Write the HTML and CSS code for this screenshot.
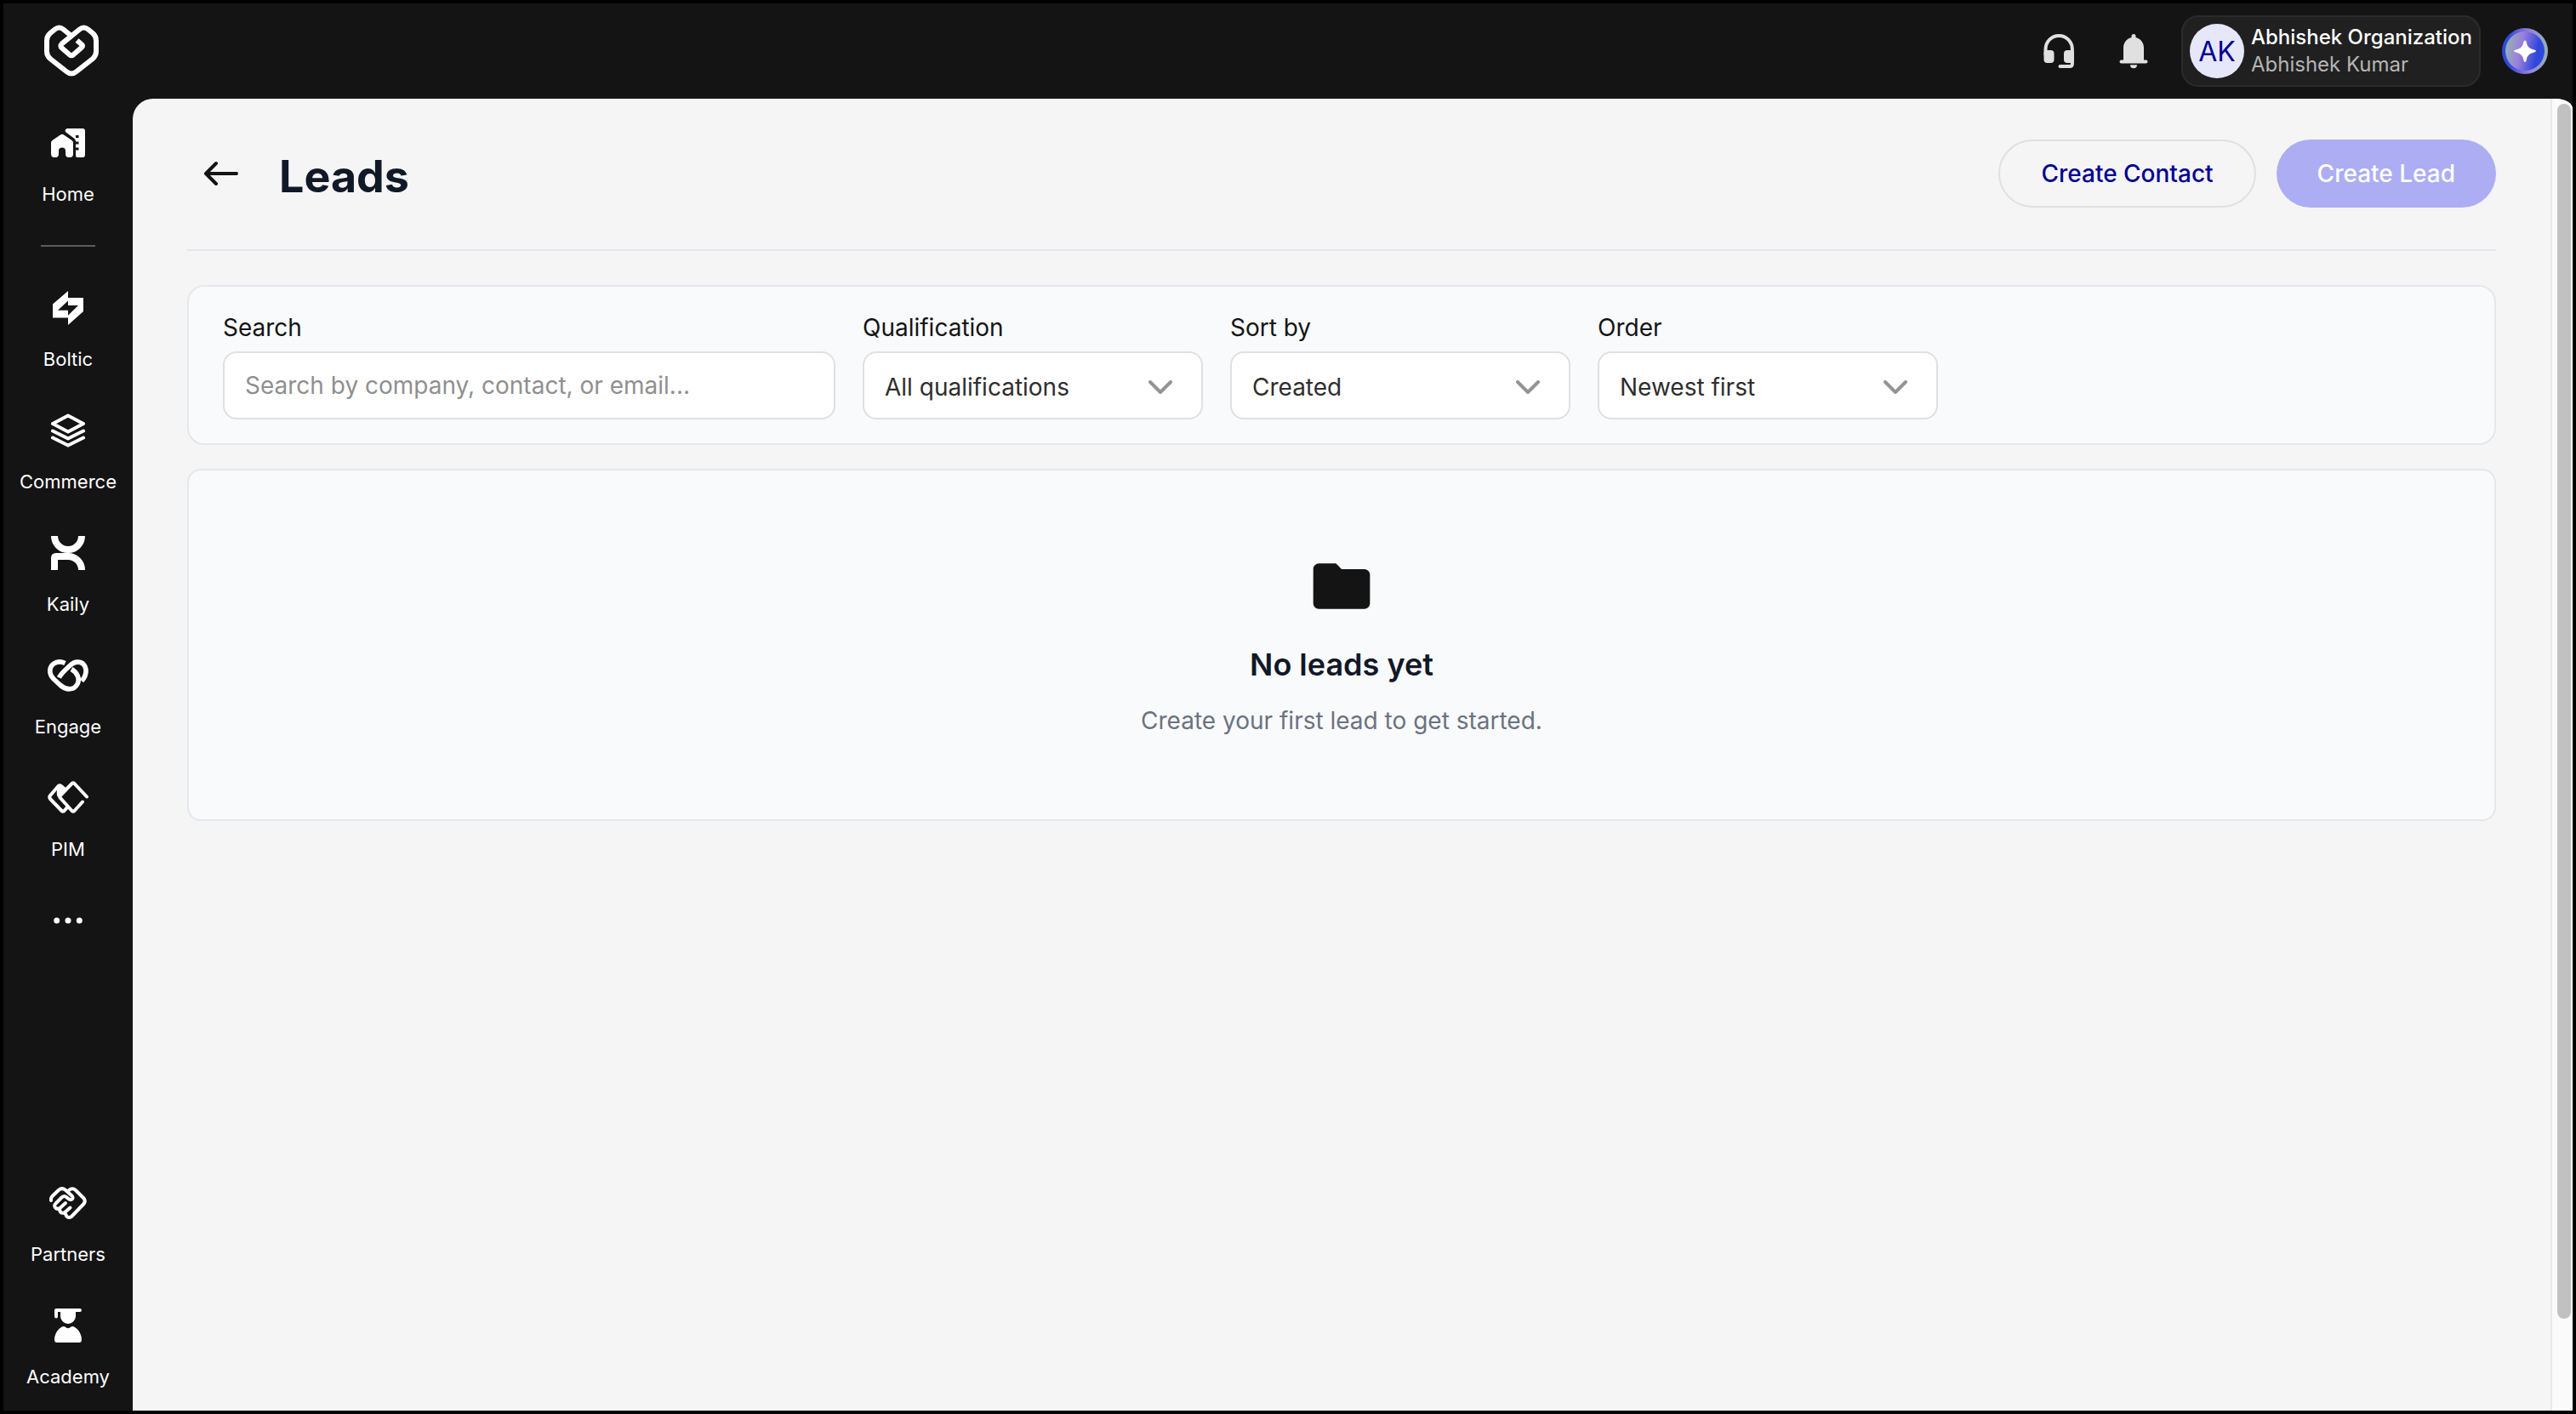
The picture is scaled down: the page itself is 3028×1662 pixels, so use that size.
FILE: index.html
```html
<!DOCTYPE html>
<html lang="en">
<head>
<meta charset="utf-8">
<title>Leads</title>
<link rel="stylesheet" href="styles.css">
</head>
<body>
<div class="app">
  <header class="topbar">
    <a class="brand" href="#" aria-label="Dashboard">
      <svg width="64" height="64" viewBox="52 28 64 64" fill="none" stroke="#fff" stroke-width="6"><path d="M90.500 47.500L96 52.300Q98 54 96 55.800L86 64.500Q84 66 82 64.500L72.800 56.500Q70 54 72.800 51.300L93.500 34.500Q98.500 30.500 103.500 34.500L109 39Q113 42.500 113 47.500V60.500Q113 65.500 109 69L90 84Q84 89 78 84L59 69Q55 65.500 55 60.500V47.500Q55 42.500 59 39L64.500 34.500Q69.500 30.500 74.500 34.500L83 41.500"/></svg>
    </a>
    <div class="tools">
      <div class="tool-icons">
        <button class="icon-button" aria-label="Support"><svg width="48" height="48" viewBox="2396 36 48 48" fill="#e0e0e0"><path d="M2404.500 64V58a15.700 16 0 0 1 31.400 0V75q0 3-3 3H2421.500" fill="none" stroke="#e0e0e0" stroke-width="4" stroke-linecap="round"/><rect x="2402.500" y="59" width="12" height="15" rx="4"/><rect x="2426" y="59" width="12" height="15" rx="4"/></svg></button>
        <button class="icon-button" aria-label="Notifications"><svg width="48" height="48" viewBox="2484 36 48 48" fill="#e0e0e0"><path d="M2505.500 42.500a2.500 2.500 0 0 1 5 0V44C2516.500 45.500 2520 50.500 2520 56V70.500H2522.500a2 2 0 0 1 0 4H2493.500a2 2 0 0 1 0-4H2496V56C2496 50.500 2499.500 45.500 2505.500 44zM2504 76.200h8a4 4 0 0 1-8 0z"/></svg></button>
      </div>
      <button class="account">
        <span class="avatar">AK</span>
        <span class="account-text"><span class="org">Abhishek Organization</span><span class="user">Abhishek Kumar</span></span>
      </button>
      <button class="icon-button" aria-label="Assistant">
        <svg width="56" height="56" viewBox="0 0 56 56"><defs><linearGradient id="ring" x1="0" y1="0" x2="1" y2="0"><stop offset="0" stop-color="#2f48dc"/><stop offset=".15" stop-color="#3049dc"/><stop offset=".6" stop-color="#9b7fdc"/><stop offset="1" stop-color="#93b3b4"/></linearGradient><linearGradient id="orb" x1="0" y1=".4" x2="1" y2=".6"><stop offset="0" stop-color="#93b3b4"/><stop offset=".38" stop-color="#9b7fdc"/><stop offset=".8" stop-color="#2f48dc"/><stop offset="1" stop-color="#2f48dc"/></linearGradient></defs><circle cx="28" cy="28" r="27" fill="url(#ring)"/><circle cx="28" cy="28" r="23" fill="url(#orb)"/><path d="M28 15.500Q29.500 15.500 30 19Q31.500 24.500 37 26Q41 26.800 41 28Q41 29.200 37 30Q31.500 31.500 30 37Q29.500 41 28 41Q26.500 41 26 37Q24.500 31.500 19 30Q15 29.200 15 28Q15 26.800 19 26Q24.500 24.500 26 19Q26.500 15.500 28 15.500Z" fill="#fff"/></svg>
      </button>
    </div>
  </header>

  <div class="body">
    <nav class="sidebar" aria-label="Products">
      <div class="nav-group">
        <a class="nav-item" href="#"><svg width="48" height="48" viewBox="56 144 48 48" fill="#fff"><path d="M60 168q0-2 1.500-3L71 158.500q2-1.300 4 0L84.500 165q1.500 1.200 1.500 3V181q0 4-4 4h-1q-4 0-4-4v-4q0-3.500-4-3.500t-4 3.500v4q0 4-4 4h-1q-4 0-4-4z"/><path d="M79 151H97q3 0 3 3V182q0 3-3 3H91q-2 0-2-2V166q0-2-2-3.500L77.500 155.500q-1.500-1.500-.5-3q.8-1.500 2-1.500z"/><path fill="#141414" d="M89 159h3.500v3H89zM89 166.500h3.500v3H89zM89 173.500h3.500v3H89z"/></svg><span>Home</span></a>
      </div>
      <hr class="nav-rule">
      <div class="nav-group">
        <a class="nav-item" href="#"><svg width="48" height="48" viewBox="56 338 48 48" fill="#fff" fill-rule="evenodd"><path d="M80 342L62 357.500V373.500H80V382L98 366V350H80zM80 353.500L68 364.700H80V370.700L92 359H80z"/></svg><span>Boltic</span></a>
        <a class="nav-item" href="#"><svg width="48" height="48" viewBox="56 482 48 48" fill="none" stroke="#fff" stroke-width="4" stroke-linecap="round" stroke-linejoin="round"><path d="M80 488.500L98 498L80 507.500L62 498zM62 506.500L80 515.500L98 506.500M62 514.500L80 523.500L98 514.500"/></svg><span>Commerce</span></a>
        <a class="nav-item" href="#"><svg width="48" height="48" viewBox="56 626 48 48" fill="none" stroke="#fff" stroke-width="8"><path d="M64 630a16 16 0 0 0 32 0M64 670V656q0-2 2-2H80a16 16 0 0 1 16 16"/></svg><span>Kaily</span></a>
        <a class="nav-item" href="#"><svg width="48" height="48" viewBox="56 770 48 48" fill="none" stroke="#fff" stroke-width="5.600"><path d="M76.500 779.500C66 774.500 57.500 782 59 791C59.500 794 61 796 63 798L71 805.500C78 811.500 87 811.500 91 804C94.500 797 90 790 84 786.500"/><path d="M69.500 796.500C72 791 78 786.500 82 782.500C88 776.500 96.500 776.500 100 783.500C102.500 790 99.500 796.500 96 800.500"/></svg><span>Engage</span></a>
        <a class="nav-item" href="#"><svg width="48" height="48" viewBox="56 914 48 48" fill="none" stroke="#fff" stroke-width="4" stroke-linecap="round" stroke-linejoin="round"><path d="M102 936.500L87.500 921Q86 919.500 84.500 921L71 935Q69.500 936.500 71 938L84.500 953Q86 954.500 87.500 953L97 942.500"/><path d="M77 928.500L72 924Q70 922.500 68.500 924L59 935Q57.500 937 59 939L72.500 953Q74 954.500 75.500 953L79 949"/><path fill="#fff" stroke-width="3" d="M70 925L76 930L71 935.500L68.500 935Q67.500 929 70 925z"/></svg><span>PIM</span></a>
        <button class="icon-button" aria-label="More"><svg width="48" height="48" viewBox="56 1058 48 48" fill="#fff"><circle cx="66.700" cy="1082" r="3.500"/><circle cx="80" cy="1082" r="3.500"/><circle cx="93.300" cy="1082" r="3.500"/></svg></button>
      </div>
      <div class="nav-group nav-bottom">
        <a class="nav-item" href="#"><svg width="48" height="48" viewBox="56 1390 48 48" fill="none" stroke="#fff" stroke-width="4" stroke-linecap="round" stroke-linejoin="round"><path d="M60 1411V1409.500Q60 1407.500 61.500 1406L69 1398.800Q73 1395.500 77 1398.800L84.500 1405.500Q87 1408.500 84 1409.800Q82 1410.500 80 1408.800L78 1407Q75.500 1405 73 1407L66 1414Q62.500 1417.500 65.500 1420Q68.500 1422 71 1419.500L77 1414"/><path d="M70 1421Q70.500 1427 75.500 1425.500L82.500 1419.500"/><path d="M77 1427Q79 1433 84 1430L98.500 1415Q101 1411.500 98.500 1408.500L89 1399Q85 1395.500 81 1399"/></svg><span>Partners</span></a>
        <a class="nav-item" href="#"><svg width="48" height="48" viewBox="56 1534 48 48" fill="#fff"><path d="M66 1538H94a2 2 0 0 1 0 4H89V1547a9 9 0 0 1-18 0V1542H68V1547.500a2 2 0 0 1-4 0V1540a2 2 0 0 1 2-2z"/><path d="M64 1575C64 1567 69 1561 74 1559Q75.500 1558.600 76.500 1559.600Q80 1563 83.500 1559.600Q84.500 1558.600 86 1559C91 1561 96 1567 96 1575Q96 1578 93 1578H67Q64 1578 64 1575z"/></svg><span>Academy</span></a>
      </div>
    </nav>

    <div class="panel">
      <main class="content">
        <div class="page-head">
          <button class="back" aria-label="Back"><svg width="48" height="48" viewBox="236 180 48 48" fill="none" stroke="#141414" stroke-width="4" stroke-linecap="round" stroke-linejoin="round"><path d="M278 204H242M254 192L242 204L254 216"/></svg></button>
          <h1>Leads</h1>
          <div class="actions">
            <button class="btn btn-outline">Create Contact</button>
            <button class="btn btn-primary" disabled>Create Lead</button>
          </div>
        </div>

        <form class="filters">
          <div class="field field-search">
            <label for="search">Search</label>
            <input id="search" type="text" placeholder="Search by company, contact, or email...">
          </div>
          <div class="field">
            <label for="qualification">Qualification</label>
            <div class="select"><select id="qualification"><option>All qualifications</option></select><svg class="chevron" width="28" height="16" viewBox="0 0 28 16"><path d="M2 2L14 14L26 2"/></svg></div>
          </div>
          <div class="field">
            <label for="sort">Sort by</label>
            <div class="select"><select id="sort"><option>Created</option></select><svg class="chevron" width="28" height="16" viewBox="0 0 28 16"><path d="M2 2L14 14L26 2"/></svg></div>
          </div>
          <div class="field">
            <label for="order">Order</label>
            <div class="select"><select id="order"><option>Newest first</option></select><svg class="chevron" width="28" height="16" viewBox="0 0 28 16"><path d="M2 2L14 14L26 2"/></svg></div>
          </div>
        </form>

        <section class="empty">
          <svg width="80" height="80" viewBox="0 0 24 24" fill="#141414"><path d="M10 4H4c-1.100 0-1.990.9-1.990 2L2 18c0 1.100.9 2 2 2h16c1.100 0 2-.9 2-2V8c0-1.100-.9-2-2-2h-8l-2-2z"/></svg>
          <h2>No leads yet</h2>
          <p>Create your first lead to get started.</p>
        </section>
      </main>
      <div class="scrollbar"><div class="thumb"></div></div>
    </div>
  </div>
</div>
</body>
</html>
```
FILE: styles.css
```css
* { box-sizing: border-box; }
body { margin: 0; background: #000; font-family: Inter, "Liberation Sans", sans-serif; }
button, input, select { font: inherit; margin: 0; }
svg { display: block; }
h1, h2, p { margin: 0; }

.app { display: flex; flex-direction: column; min-height: 100vh; border: 4px solid #000; background: #141414; }

.topbar { display: flex; align-items: center; justify-content: space-between; height: 112px; padding: 0 28px 0 48px; }
.tools { display: flex; align-items: center; gap: 24px; }
.tool-icons { display: flex; gap: 40px; margin-right: 8px; }
.icon-button { display: block; padding: 0; border: 0; background: none; }

.account { display: flex; align-items: center; gap: 8px; padding: 8px; border: 2px solid #2b2b2b; border-radius: 20px; background: #202020; text-align: left; }
.avatar { display: grid; place-items: center; width: 64px; height: 64px; border-radius: 50%; background: #e7e7fa; color: #000093; font-size: 32px; }
.account-text { display: grid; font-size: 24px; line-height: 32px; }
.org { color: #fff; font-weight: 500; }
.user { color: #b5b5b5; }

.body { display: flex; flex: 1; }
.sidebar { display: flex; flex-direction: column; align-items: center; width: 152px; flex: none; padding: 28px 0 24px; }
.nav-group { display: flex; flex-direction: column; align-items: center; gap: 44px; }
.nav-item { display: flex; flex-direction: column; align-items: center; gap: 20px; color: #fff; font-size: 22px; line-height: 32px; text-decoration: none; }
.nav-rule { width: 64px; height: 2px; margin: 44px 0 48px; border: 0; background: #5c5c5c; }
.nav-bottom { margin-top: auto; }

.panel { display: flex; flex: 1; min-width: 0; overflow: hidden; border-radius: 24px 20px 0 0 / 24px 12px 0 0; background: #f5f5f5; }
.content { flex: 1; min-width: 0; padding: 48px 64px; }

.page-head { display: flex; align-items: flex-start; padding-bottom: 43px; border-bottom: 2px solid #e5e5eb; }
.back { display: flex; align-items: center; height: 80px; padding: 0 16px; border: 0; background: none; }
h1 { margin-left: 28px; color: #111827; font-size: 52px; font-weight: 700; line-height: 88px; margin-bottom: -2px; }
.actions { display: flex; gap: 24px; margin-left: auto; }
.btn { height: 80px; padding: 0 48px; border: 2px solid #e0e0e0; border-radius: 40px; background: none; font-size: 28px; font-weight: 500; white-space: nowrap; }
.btn-outline { color: #000093; }
.btn-primary { border: 0; background: #adadf4; color: #fff; }

.filters { display: flex; gap: 32px; margin-top: 40px; padding: 28px 40px; border: 2px solid #e5e7eb; border-radius: 20px; background: #f9fafc; }
.field { display: flex; flex-direction: column; flex: 0 1 400px; gap: 8px; min-width: 0; color: #141414; font-size: 28px; line-height: 40px; }
.field-search { flex-basis: 720px; }
.field input, .field select { width: 100%; height: 80px; padding: 0 24px; border: 2px solid #e0e0e0; border-radius: 16px; background: #fff; color: #2e2e2e; outline: 0; }
.field input::placeholder { color: #8f8f8f; opacity: 1; }
.select { display: grid; align-items: center; }
.select > * { grid-area: 1 / 1; }
.field select { padding-top: 4px; appearance: none; }
.chevron { justify-self: end; margin: 4px 36px 0 0; fill: none; stroke: #949494; stroke-width: 4; stroke-linecap: round; stroke-linejoin: round; pointer-events: none; }

.empty { display: flex; flex-direction: column; align-items: center; margin-top: 28px; padding: 96px 40px; border: 2px solid #e5e7eb; border-radius: 16px; background: #f9fafc; text-align: center; }
h2 { margin: 28px 0 22px; color: #111827; font-size: 36px; font-weight: 600; line-height: 48px; }
.empty p { color: #6b7280; font-size: 28px; line-height: 40px; }

.scrollbar { display: flex; flex-direction: column; width: 26px; flex: none; padding: 6px 2px 6px 6px; border-left: 2px solid #e8e8e8; background: #fafafa; }
.scrollbar::after { content: ""; flex: 1; }
.thumb { flex: 14; border-radius: 8px; background: #c1c1c1; }
```
